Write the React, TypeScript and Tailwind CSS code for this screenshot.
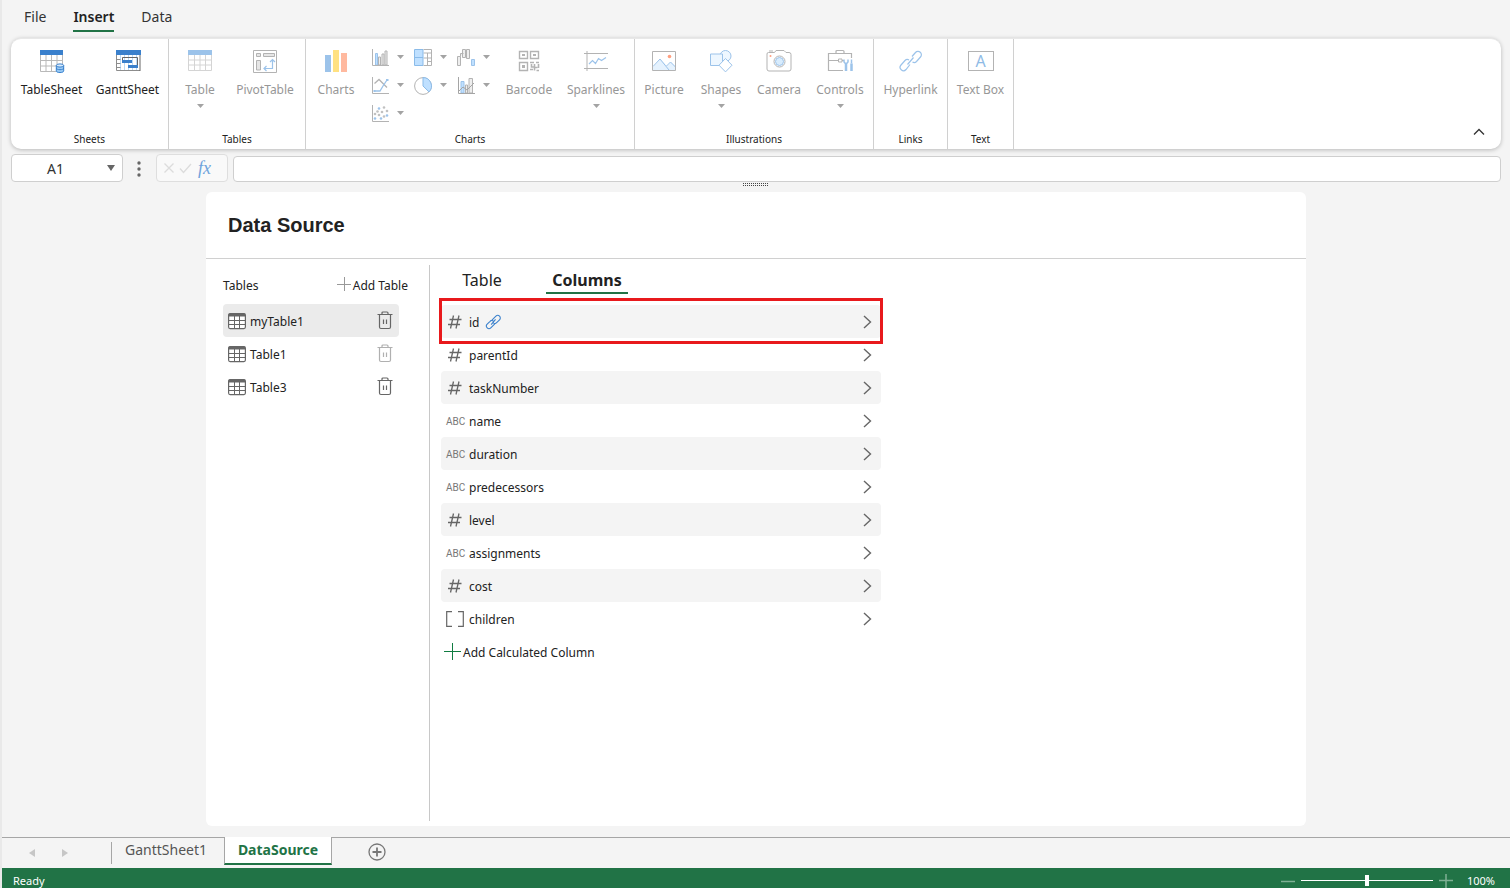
import React from 'react';

const GRAY = '#b3b3b3';
const BLUE = '#9cc3ea';
const PALE = '#bfe0ff';

interface IconProps {
    w?: number;
    h?: number;
    children: React.ReactNode;
    className?: string;
}

function Svg({ w = 26, h = 24, children, className = '' }: IconProps) {
    return (
        <svg width={w} height={h} viewBox={`0 0 ${w} ${h}`} fill="none" aria-hidden="true" className={`shrink-0 ${className}`}>
            {children}
        </svg>
    );
}

function Caret({ className = 'text-[#a3a3a3]' }: { className?: string }) {
    return (
        <Svg w={7} h={4} className={className}>
            <path d="M0 0h7L3.5 4z" fill="currentColor" />
        </Svg>
    );
}

/* Ribbon icons */

const TableSheetIcon = (
    <Svg>
        <path d="M1.5 6v16.500h22V6M1.500 11.500h22M1.500 17h22M7 6v16.500M12.500 6v16.500M18 6v16.500" stroke="#b9b9b9" />
        <path d="M1 1h23v5H1z" fill="#3a80cc" />
        <path d="M17 16.500v5.500c0 1.200 1.700 2 4 2s4-.8 4-2v-5.500z" fill="#9bcbf5" />
        <ellipse cx="21" cy="16.500" rx="3.700" ry="1.600" fill="#d8ecff" stroke="#3a80cc" />
        <path d="M17.300 16.500v5.300c0 1 1.600 1.700 3.700 1.700s3.700-.7 3.700-1.700v-5.300M17.300 19c0 1 1.600 1.700 3.700 1.700s3.700-.7 3.700-1.700" stroke="#3a80cc" />
    </Svg>
);

const GanttSheetIcon = (
    <Svg>
        <path d="M5.500 6v16M9.500 6v16M13.500 6v16M17.500 6v16M21.500 6v16" stroke="#b9daf8" />
        <path d="M1.500 6v15.500h23.500M1.500 10.500h4M1.500 14.500h4M1.500 18.500h4" stroke="#8d8d8d" />
        <path d="M25 6v16M7.500 14V8.500h15V16" stroke="#666" />
        <path d="M1 1h25v5H1z" fill="#3a80cc" />
        <path d="M7 11h10v3H7zM13 16h10v3H13z" fill="#3a80cc" />
    </Svg>
);

const TableIcon = (
    <Svg>
        <path d="M1.500 6v15.500h23V6M1.500 11h23M1.500 16h23M7.500 6v15.500M13 6v15.500M18.500 6v15.500" stroke="#d4d4d4" />
        <path d="M1 1h24v5H1z" fill={BLUE} />
    </Svg>
);

const PivotIcon = (
    <Svg>
        <path d="M1.500 1.500h23v22h-23z" stroke={GRAY} />
        <path d="M4.500 4.500h4v3h-4zM11.500 4.500h11v3h-11zM4.500 11.500h4v9.500h-4z" fill="#e6e6e6" stroke={GRAY} />
        <path d="M12 19.500h8.500V11M14.500 17l-2.500 2.500 2.500 2.500M18 13l2.500-2.500L23 13" stroke={BLUE} strokeWidth="1.200" />
    </Svg>
);

const ChartsIcon = (
    <Svg>
        <path d="M2 6h6v17H2z" fill={BLUE} />
        <path d="M10 1h6v22h-6z" fill="#ffe182" />
        <path d="M18 4h6v19h-6z" fill="#ffb99f" />
    </Svg>
);

const BarcodeIcon = (
    <Svg>
        <path d="M3.500 2.500h8v7h-8zM14.500 2.500h8v7h-8zM3.500 13.500h8v8h-8z" stroke={GRAY} strokeWidth="1.400" />
        <path d="M6 5h3v2H6zM17 5h3v2h-3zM6 16h3v3H6z" fill={GRAY} />
        <path d="M14 13.500h4M20 13.500h3M15.500 15v3h3v-3M22.500 15v4M14 20.500h3M18.500 21.500v-3h3M20.500 21.500h2.500" stroke={GRAY} strokeWidth="1.600" />
    </Svg>
);

const SparklinesIcon = (
    <Svg>
        <path d="M4 2v20M1 4.500h24M1 19.500h24" stroke={GRAY} />
        <path d="M6 15l3.500-3.500 3 3 3-5 3 2 4.500-3" stroke={BLUE} strokeWidth="1.200" />
    </Svg>
);

const PictureIcon = (
    <Svg>
        <path d="M2 18l7.500-8 6.500 7 4-4 4.500 4.500v4H2z" fill="#e5f2fe" />
        <path d="M2 17.500l7-7.500 9 11M15.500 17l4-4 5 5" stroke={BLUE} />
        <path d="M1.500 2.500h23v19h-23z" stroke={GRAY} />
        <circle cx="18.500" cy="7.500" r="1.800" fill="#ff9f80" />
    </Svg>
);

const ShapesIcon = (
    <Svg>
        <circle cx="17.500" cy="7" r="5.500" fill="#eef7ff" stroke={BLUE} />
        <path d="M2.500 5h12v11.500h-12z" fill="#eef7ff" stroke={BLUE} />
        <path d="M17.500 9.500l6.500 6.700-6.500 6.700-6.500-6.700z" fill="#fff" stroke={BLUE} />
    </Svg>
);

const CameraIcon = (
    <Svg>
        <path d="M2.500 3.500h6l1.500-2h8l2 2h3a2 2 0 0 1 2 2v14.500a2 2 0 0 1-2 2H3a2 2 0 0 1-2-2V5a1.500 1.500 0 0 1 1.500-1.500z" stroke={GRAY} />
        <path d="M3 2h4" stroke={GRAY} />
        <circle cx="13.500" cy="12.500" r="5.500" stroke={GRAY} />
        <circle cx="13.500" cy="12.500" r="4" fill="#d8ecfd" stroke={BLUE} />
        <circle cx="4.500" cy="7" r="1" fill="#ff9f80" />
    </Svg>
);

const ControlsIcon = (
    <Svg>
        <path d="M9 4.500v-2q0-1 1-1h6q1 0 1 1v2M16 21.500H1.500v-17h23V9M1.500 11.500h10M15 11.500h2" stroke={GRAY} strokeWidth="1.200" />
        <path d="M11.500 10h3.500v3h-3.500z" stroke={GRAY} />
        <path d="M17 10.500v2.500l1.500 1.500h1L21 13v-2.500" stroke={BLUE} strokeWidth="1.500" />
        <path d="M19 14v8M24.500 14.500V22" stroke={BLUE} strokeWidth="2.500" />
        <path d="M24.500 10.500v4" stroke={BLUE} strokeWidth="1.500" />
    </Svg>
);

const LINK_PATH =
    'M11 9.500l5.500-5.500a3.300 3.300 0 0 1 5 5l-4 4a3.300 3.300 0 0 1-4.500.3M15 14.500l-5.500 5.500a3.300 3.300 0 0 1-5-5l4-4a3.300 3.300 0 0 1 4.500-.3M10 15.500l6-7';

const HyperlinkIcon = (
    <Svg>
        <path
            d="M14 7.500l3.500-4a3.300 3.300 0 0 1 5 4.500l-4 4.500a3.300 3.300 0 0 1-4 .5M12 15.500l-4 5a3.300 3.300 0 0 1-5-4.500l4-4.500a3.300 3.300 0 0 1 4-.5M9.500 15.500l6-7"
            stroke={BLUE}
            strokeWidth="1.200"
        />
    </Svg>
);

const TextBoxIcon = (
    <span className="flex h-5 w-[26px] items-center justify-center border border-[#b3b3b3] font-['Noto_Sans',sans-serif] text-base leading-none text-[#8fbbe6]">
        A
    </span>
);

const smallCharts = [
    {
        label: 'Column chart',
        art: (
            <>
                <path d="M4.500 4.500h2V16h-2z" fill={PALE} stroke={BLUE} />
                <path d="M7.500 8h2v8h-2zM11 5h2v11h-2zM14 2h2v14h-2z" fill="#eee" stroke={GRAY} />
                <path d="M1.500 0v16.500H18" stroke={GRAY} />
            </>
        ),
    },
    {
        label: 'Hierarchy chart',
        art: (
            <>
                <path d="M1 1h8v16H1z" fill={PALE} />
                <path d="M9.500.5h8v16h-8M9.500 4h8M13.500 4v5M9.500 9h8M13.500 9v7.500M13.500 12.500h4" stroke={GRAY} />
                <path d="M.5.5h8.500v16H.5zM.5 8.500h8.500" stroke="#8abbe9" />
            </>
        ),
    },
    {
        label: 'Waterfall chart',
        art: (
            <>
                <path d="M.5 7.500h3v9h-3zM3.500 7.500v-3h3M5.500.5h3v8h-3zM9.500.5h3v9h-3z" fill="#eee" stroke={GRAY} />
                <path d="M14.500 10.500h3v6h-3z" fill={PALE} stroke={BLUE} />
            </>
        ),
    },
    {
        label: 'Line chart',
        art: (
            <>
                <path d="M1.500 0v16.500H18" stroke={GRAY} />
                <path d="M3.500 6.500L8 2.500l8 8" stroke={GRAY} strokeWidth="1.300" />
                <path d="M3.500 14H9l3-5 4-6" stroke={BLUE} strokeWidth="1.300" />
                <path d="M15 2h2.500v2H15zM2.500 13h2v2h-2z" fill={BLUE} />
            </>
        ),
    },
    {
        label: 'Pie chart',
        art: (
            <>
                <circle cx="9" cy="9" r="8.400" stroke={GRAY} />
                <path d="M9 .6a8.400 8.400 0 0 1 6 14.300L9 9z" fill={PALE} stroke="#8abbe9" />
            </>
        ),
    },
    {
        label: 'Combo chart',
        art: (
            <>
                <path d="M4 4.500h3V16H4z" fill={PALE} stroke={BLUE} />
                <path d="M8.500 8h2v8h-2zM12 1.500h3.500V16H12z" fill="#eee" stroke={GRAY} />
                <path d="M1.500 0v16.500H18M2 14l4-4 4 3 7-7" stroke="#a5a5a5" />
            </>
        ),
    },
    {
        label: 'Scatter chart',
        art: (
            <>
                <path d="M1.500 0v16.500H18" stroke={GRAY} />
                <g fill={BLUE}>
                    <circle cx="8" cy="3.500" r="1.300" />
                    <circle cx="16" cy="10.500" r="1.300" />
                    <circle cx="4" cy="13.500" r="1.300" />
                    <circle cx="10" cy="13.500" r="1.300" />
                </g>
                <g fill="#c1c1c1">
                    <circle cx="13" cy="2.500" r="1.300" />
                    <circle cx="6.500" cy="6.500" r="1.300" />
                    <circle cx="11" cy="7" r="1.300" />
                    <circle cx="16" cy="6" r="1.300" />
                    <circle cx="8" cy="10" r="1.300" />
                    <circle cx="13" cy="11.500" r="1.300" />
                    <circle cx="4" cy="9" r="1.300" />
                </g>
            </>
        ),
    },
];

interface RibbonButtonProps {
    icon: React.ReactNode;
    label: string;
    width: string;
    enabled?: boolean;
    menu?: boolean;
}

function RibbonButton({ icon, label, width, enabled = false, menu = false }: RibbonButtonProps) {
    return (
        <button
            type="button"
            disabled={!enabled}
            className={`flex shrink-0 flex-col items-center text-xs leading-4 whitespace-nowrap ${width} ${enabled ? 'text-[#222]' : 'text-[#979797]'}`}
        >
            <span className="mb-[9px] flex h-6 items-center">{icon}</span>
            {label}
            {menu && <span className="mt-1.5 block"><Caret /></span>}
        </button>
    );
}

function RibbonGroup({ title, width, children }: { title: string; width: string; children: React.ReactNode }) {
    return (
        <section aria-label={title} className={`flex shrink-0 flex-col border-r border-[#d0d0d0] pt-[10px] pb-0.5 ${width}`}>
            <div className="flex min-h-0 flex-1 items-start justify-center">{children}</div>
            <div className="text-center text-[10px] leading-4 text-[#222]">{title}</div>
        </section>
    );
}

function Ribbon() {
    return (
        <div className="mr-[9px] ml-[9px] flex h-[111px] rounded-[10px] border-t border-[#e8e8e8] bg-white shadow-[0_1px_4px_rgba(0,0,0,0.25)]">
            <RibbonGroup title="Sheets" width="w-[158px]">
                <RibbonButton icon={TableSheetIcon} label="TableSheet" width="w-[76px]" enabled />
                <RibbonButton icon={GanttSheetIcon} label="GanttSheet" width="w-[76px]" enabled />
            </RibbonGroup>
            <RibbonGroup title="Tables" width="w-[137px]">
                <RibbonButton icon={TableIcon} label="Table" width="w-14" menu />
                <RibbonButton icon={PivotIcon} label="PivotTable" width="w-[74px]" />
            </RibbonGroup>
            <RibbonGroup title="Charts" width="w-[329px]">
                <RibbonButton icon={ChartsIcon} label="Charts" width="w-14" />
                <div className="ml-[5px] grid grid-cols-3">
                    {smallCharts.map((chart) => (
                        <button key={chart.label} type="button" disabled aria-label={chart.label} className="flex h-7 w-[43px] items-start gap-2 pl-0.5">
                            <Svg w={18} h={18}>{chart.art}</Svg>
                            <span className="pt-1.5"><Caret /></span>
                        </button>
                    ))}
                </div>
                <RibbonButton icon={BarcodeIcon} label="Barcode" width="w-[62px]" />
                <RibbonButton icon={SparklinesIcon} label="Sparklines" width="w-[72px]" menu />
            </RibbonGroup>
            <RibbonGroup title="Illustrations" width="w-[239px]">
                <RibbonButton icon={PictureIcon} label="Picture" width="w-14" />
                <RibbonButton icon={ShapesIcon} label="Shapes" width="w-[58px]" menu />
                <RibbonButton icon={CameraIcon} label="Camera" width="w-[58px]" />
                <RibbonButton icon={ControlsIcon} label="Controls" width="w-16" menu />
            </RibbonGroup>
            <RibbonGroup title="Links" width="w-[74px]">
                <RibbonButton icon={HyperlinkIcon} label="Hyperlink" width="w-16" />
            </RibbonGroup>
            <RibbonGroup title="Text" width="w-[66px]">
                <RibbonButton icon={TextBoxIcon} label="Text Box" width="w-16" />
            </RibbonGroup>
            <button type="button" aria-label="Collapse ribbon" className="mr-4 mb-3 ml-auto self-end">
                <Svg w={12} h={10}>
                    <path d="M1 7.500l5-5 5 5" stroke="#333" strokeWidth="1.300" />
                </Svg>
            </button>
        </div>
    );
}

function FormulaBar() {
    return (
        <div className="mr-[9px] ml-[9px] flex items-end pt-[5px]">
            <div className="flex h-7 w-28 items-center rounded border border-[#cfcfcf] bg-white pr-[7px]">
                <input aria-label="Name box" defaultValue="A1" className="min-w-0 flex-1 bg-transparent pt-0.5 pr-2 text-center text-sm leading-5 text-[#333] outline-none" />
                <button type="button" aria-label="Named ranges">
                    <Svg w={8} h={6}>
                        <path d="M0 0h8L4 6z" fill="#666" />
                    </Svg>
                </button>
            </div>
            <Svg w={4} h={28} className="mr-[15px] ml-[14px]">
                <g fill="#666">
                    <circle cx="2" cy="9" r="1.700" />
                    <circle cx="2" cy="15" r="1.700" />
                    <circle cx="2" cy="21" r="1.700" />
                </g>
            </Svg>
            <div className="flex h-7 w-[72px] items-center gap-1 rounded border border-[#dedede] bg-[#f9f9f9] pl-1.5">
                <button type="button" disabled aria-label="Cancel">
                    <Svg w={12} h={12}><path d="M1.500 1.500l9 9M10.500 1.500l-9 9" stroke="#dcdcdc" strokeWidth="1.300" /></Svg>
                </button>
                <button type="button" disabled aria-label="Enter">
                    <Svg w={13} h={12}><path d="M1 6.500L4.500 10.500L12 2" stroke="#dcdcdc" strokeWidth="1.300" /></Svg>
                </button>
                <button type="button" aria-label="Insert function" className="pl-0.5 font-['Liberation_Serif',serif] text-lg leading-5 text-[#6fa3dc] italic">
                    fx
                </button>
            </div>
            <input aria-label="Formula" className="ml-[5px] h-[26px] min-w-0 flex-1 rounded border border-[#cfcfcf] bg-white px-2 text-sm outline-none" />
        </div>
    );
}

/* Data source panel */

const tables = [
    { name: 'myTable1', active: true, locked: false },
    { name: 'Table1', active: false, locked: true },
    { name: 'Table3', active: false, locked: false },
];

type ColumnKind = 'number' | 'text' | 'array';

interface Column {
    name: string;
    kind: ColumnKind;
    primary?: boolean;
}

const columns: Column[] = [
    { name: 'id', kind: 'number', primary: true },
    { name: 'parentId', kind: 'number' },
    { name: 'taskNumber', kind: 'number' },
    { name: 'name', kind: 'text' },
    { name: 'duration', kind: 'text' },
    { name: 'predecessors', kind: 'text' },
    { name: 'level', kind: 'number' },
    { name: 'assignments', kind: 'text' },
    { name: 'cost', kind: 'number' },
    { name: 'children', kind: 'array' },
];

function KindIcon({ kind }: { kind: ColumnKind }) {
    if (kind === 'text') {
        return <span className="pt-0.5 font-['Roboto',sans-serif] text-[10px] leading-4 text-[#777]">ABC</span>;
    }
    if (kind === 'array') {
        return (
            <Svg w={18} h={16}>
                <path d="M6 .7H.7v14.600H6M12 .7h5.300v14.600H12" stroke="#666" strokeWidth="1.200" />
            </Svg>
        );
    }
    return (
        <Svg w={18} h={16}>
            <path d="M7.500 1.500L4.500 14.500M13 1.500L10 14.500M3.500 5.500h12M2 10.500h12" stroke="#666" strokeWidth="1.300" />
        </Svg>
    );
}

function TableGlyph() {
    return (
        <Svg w={18} h={18}>
            <rect x=".6" y="1.600" width="16.800" height="15" rx="1.500" fill="#fff" stroke="#666" strokeWidth="1.200" />
            <path d="M1 1.500h16V4.500H1z" fill="#666" />
            <path d="M1 8.500h16M1 12.500h16M6.500 4v12.500M11.500 4v12.500" stroke="#666" />
        </Svg>
    );
}

function TrashGlyph({ muted }: { muted: boolean }) {
    return (
        <Svg w={16} h={20} className={muted ? 'text-[#b0b0b0]' : 'text-[#666]'}>
            <path d="M.5 3.500h15M5 3.500V2q0-1 1-1h4q1 0 1 1v1.500M2.500 4v12q0 1.500 1.500 1.500h8q1.500 0 1.500-1.500V4M6.500 8.500v4.500M9.500 8.500v4.500" stroke="currentColor" strokeWidth="1.200" />
        </Svg>
    );
}

function TableList() {
    return (
        <aside className="w-[224px] shrink-0 border-r border-[#c8c8c8] pl-[17px]">
            <div className="flex h-[39px] items-center pt-0.5 pr-[21px]">
                <h2 className="text-xs leading-4">Tables</h2>
                <button type="button" className="ml-auto flex items-center gap-0.5 text-xs leading-4">
                    <Svg w={14} h={18}><path d="M7.500 0v14M0 7.500h14" stroke="#999" /></Svg>
                    Add Table
                </button>
            </div>
            <ul>
                {tables.map((table) => (
                    <li key={table.name} className={`flex h-[33px] w-[176px] items-center gap-1 rounded pr-1.5 pl-[5px] ${table.active ? 'bg-[#ebebeb]' : ''}`}>
                        <TableGlyph />
                        <span className="pt-0.5 text-xs leading-4">{table.name}</span>
                        <button type="button" disabled={table.locked} aria-label={`Delete ${table.name}`} className="ml-auto">
                            <TrashGlyph muted={table.locked} />
                        </button>
                    </li>
                ))}
            </ul>
        </aside>
    );
}

function ColumnList() {
    return (
        <div className="min-w-0 flex-1 pl-[11px]">
            <div role="tablist" className="flex h-[29px] text-base leading-[30px]">
                <button type="button" role="tab" aria-selected="false" className="mr-[23px] w-[82px]">Table</button>
                <button type="button" role="tab" aria-selected="true" className="w-[82px] border-b-2 border-[#217346] font-bold">
                    Columns
                </button>
            </div>
            <div className="relative mt-[11px] w-[440px] max-w-full">
                <ul>
                    {columns.map((column, i) => (
                        <li key={column.name}>
                            <button
                                type="button"
                                className={`flex h-[33px] w-full items-center rounded pr-[9px] pl-[5px] text-left ${i % 2 === 0 ? 'bg-[#f4f4f4]' : ''}`}
                            >
                                <span className="flex w-[23px] items-center"><KindIcon kind={column.kind} /></span>
                                <span className="pt-0.5 text-xs leading-4">{column.name}</span>
                                {column.primary && (
                                    <svg width="16" height="16" viewBox="2 1 21 22" fill="none" aria-hidden="true" className="ml-1.5">
                                        <path d={LINK_PATH} stroke="#3a80cc" strokeWidth="1.500" />
                                    </svg>
                                )}
                                <Svg w={9} h={14} className="ml-auto">
                                    <path d="M1 1l6.500 6L1 13" stroke="#666" strokeWidth="1.400" />
                                </Svg>
                            </button>
                        </li>
                    ))}
                </ul>
                {/* Primary key highlight */}
                <div className="pointer-events-none absolute -inset-x-0.5 -top-[7px] h-[46px] border-[3px] border-[#e8191c]" />
            </div>
            <button type="button" className="ml-[3px] flex h-[33px] items-center gap-0.5 text-xs leading-4">
                <Svg w={17} h={18}><path d="M8.500 0v17M0 8.500h17" stroke="#107c41" /></Svg>
                <span className="pt-0.5">Add Calculated Column</span>
            </button>
        </div>
    );
}

function SheetTabs() {
    return (
        <nav aria-label="Sheets" className="mt-[11px] flex h-[31px] items-start border-t border-[#a6a6a6] text-sm">
            <div className="flex h-[30px] items-center gap-[27px] pl-[27px]">
                <button type="button" disabled aria-label="Previous sheet">
                    <Svg w={6} h={8}><path d="M6 0v8L0 4z" fill="#c6c6c6" /></Svg>
                </button>
                <button type="button" disabled aria-label="Next sheet">
                    <Svg w={6} h={8}><path d="M0 0v8l6-4z" fill="#c6c6c6" /></Svg>
                </button>
            </div>
            <button type="button" className="mt-1 ml-[43px] h-[22px] w-[113px] border-l border-[#a6a6a6] pr-1 pb-1.5 leading-4 text-[#555]">GanttSheet1</button>
            <button type="button" className="-mt-px h-7 w-[108px] border-x border-b-2 border-x-[#a6a6a6] border-b-[#217346] bg-white font-bold text-[#217346]">
                DataSource
            </button>
            <button type="button" aria-label="Add sheet" className="mt-[5px] ml-9">
                <Svg w={18} h={18}>
                    <circle cx="9" cy="9" r="8" stroke="#777" strokeWidth="1.300" />
                    <path d="M9 4.500v9M4.500 9h9" stroke="#777" strokeWidth="1.800" />
                </Svg>
            </button>
        </nav>
    );
}

function StatusBar() {
    return (
        <footer className="flex h-5 items-end bg-[#217346] pr-[15px] pl-[11px] text-[11px] leading-[14px] text-white">
            <span>Ready</span>
            <div className="ml-auto flex h-[15px] items-center">
                <button type="button" aria-label="Zoom out">
                    <Svg w={14} h={14}><path d="M0 7.500h14" stroke="#7fb094" strokeWidth="1.500" /></Svg>
                </button>
                <input
                    type="range"
                    aria-label="Zoom"
                    min="0"
                    max="200"
                    defaultValue="100"
                    className="mr-1.5 ml-1.5 h-3 w-[132px] appearance-none bg-[linear-gradient(#fff,#fff)] bg-[length:100%_1px] bg-center bg-no-repeat [&::-webkit-slider-thumb]:h-[11px] [&::-webkit-slider-thumb]:w-1 [&::-webkit-slider-thumb]:appearance-none [&::-webkit-slider-thumb]:bg-white"
                />
                <button type="button" aria-label="Zoom in">
                    <Svg w={14} h={14}><path d="M0 6.500h14M7 0v14" stroke="#7fb094" strokeWidth="1.500" /></Svg>
                </button>
                <span className="ml-[14px]">100%</span>
            </div>
        </footer>
    );
}

export default function App() {
    return (
        <div className="flex min-h-screen flex-col border-l-2 border-[#e9e9e9] bg-[#f4f4f4] font-['Noto_Sans',sans-serif] text-[#222]">
            <nav aria-label="Ribbon tabs" className="flex h-[38px] gap-[27px] pl-[22px] text-sm leading-[34px] text-[#333]">
                <button type="button" className="h-8">File</button>
                <button type="button" className="h-8 border-b-2 border-[#217346] font-semibold text-[#222]">Insert</button>
                <button type="button" className="h-8">Data</button>
            </nav>
            <Ribbon />
            <FormulaBar />
            <div className="flex h-[10px] justify-center pt-px">
                <Svg w={26} h={3}>
                    <path d="M0 .5h26M0 2.500h26" stroke="#444" strokeDasharray="1 1" />
                </Svg>
            </div>
            <main className="mx-auto flex w-full max-w-[1100px] flex-1 flex-col rounded-md bg-white">
                <header className="flex h-[67px] items-center border-b border-[#d0d0d0] pl-[22px]">
                    <h1 className="font-['Liberation_Sans',sans-serif] text-xl font-bold">Data Source</h1>
                </header>
                <div className="flex flex-1 pt-1.5 pb-[5px]">
                    <TableList />
                    <ColumnList />
                </div>
            </main>
            <SheetTabs />
            <StatusBar />
        </div>
    );
}
